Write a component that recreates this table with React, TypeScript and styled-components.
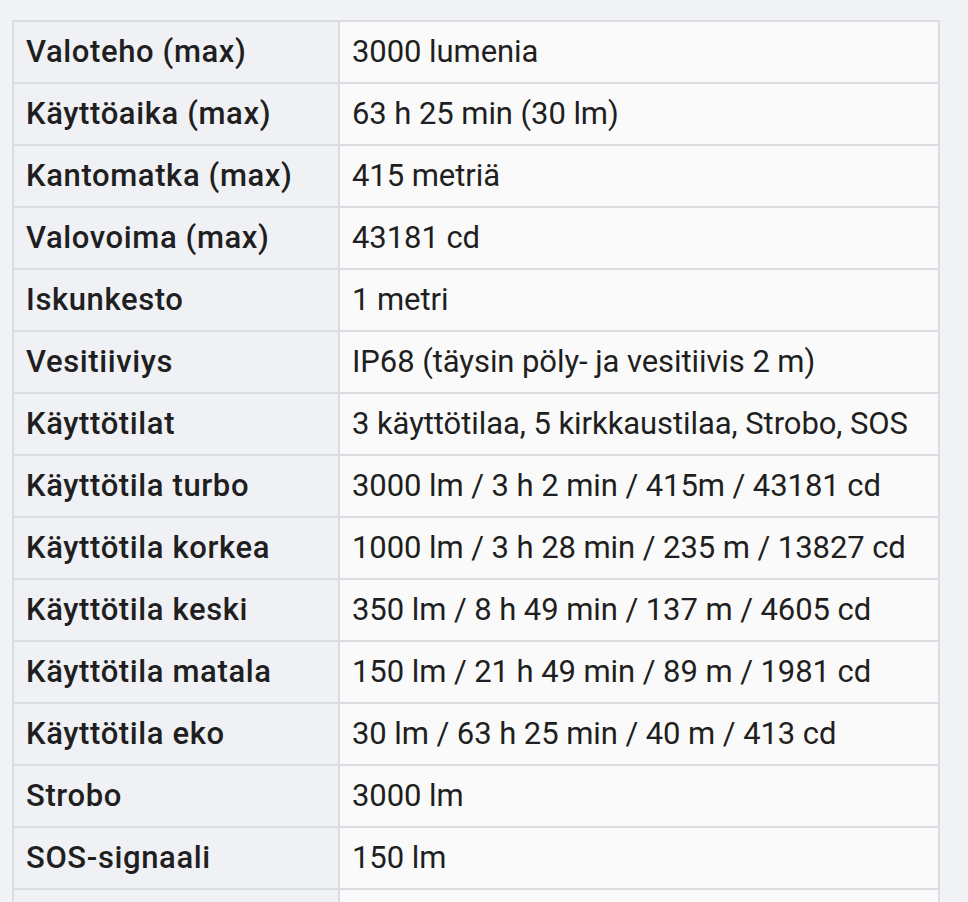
import React from "react";
import styled, { createGlobalStyle } from "styled-components";

const GlobalStyle = createGlobalStyle`
  html, body {
    margin: 0;
    padding: 0;
    background: #f2f3f7;
  }
  body {
    font-family: Roboto, "Noto Sans", "Liberation Sans", sans-serif;
    color: #1f1f21;
  }
`;

const Page = styled.div`
  padding: 20px 12px 0 12px;
`;

const SpecTable = styled.table`
  width: 928px;
  table-layout: fixed;
  border-collapse: separate;
  border-spacing: 2px;
  background: #dcdde2;
`;

const Label = styled.th`
  width: 324px;
  box-sizing: border-box;
  height: 60px;
  padding: 0 12px;
  background: #f0f1f5;
  text-align: left;
  font-weight: 500;
  font-size: 31px;
  letter-spacing: 0.62px;
  line-height: 36px;
  white-space: nowrap;
`;

const Value = styled.td`
  box-sizing: border-box;
  height: 60px;
  padding: 0 12px;
  background: #fafafa;
  font-weight: 400;
  font-size: 31px;
  letter-spacing: -0.07px;
  line-height: 36px;
  white-space: nowrap;
`;

const rows: [string, string][] = [
  ["Valoteho (max)", "3000 lumenia"],
  ["Käyttöaika (max)", "63 h 25 min (30 lm)"],
  ["Kantomatka (max)", "415 metriä"],
  ["Valovoima (max)", "43181 cd"],
  ["Iskunkesto", "1 metri"],
  ["Vesitiiviys", "IP68 (täysin pöly- ja vesitiivis 2 m)"],
  ["Käyttötilat", "3 käyttötilaa, 5 kirkkaustilaa, Strobo, SOS"],
  ["Käyttötila turbo", "3000 lm / 3 h 2 min / 415m / 43181 cd"],
  ["Käyttötila korkea", "1000 lm / 3 h 28 min / 235 m / 13827 cd"],
  ["Käyttötila keski", "350 lm / 8 h 49 min / 137 m / 4605 cd"],
  ["Käyttötila matala", "150 lm / 21 h 49 min / 89 m / 1981 cd"],
  ["Käyttötila eko", "30 lm / 63 h 25 min / 40 m / 413 cd"],
  ["Strobo", "3000 lm"],
  ["SOS-signaali", "150 lm"],
  ["\u00a0", "\u00a0"],
];

export default function App() {
  return (
    <>
      <GlobalStyle />
      <Page>
        <SpecTable>
          <tbody>
            {rows.map(([k, v], i) => (
              <tr key={i}>
                <Label scope="row">{k}</Label>
                <Value>{v}</Value>
              </tr>
            ))}
          </tbody>
        </SpecTable>
      </Page>
    </>
  );
}
